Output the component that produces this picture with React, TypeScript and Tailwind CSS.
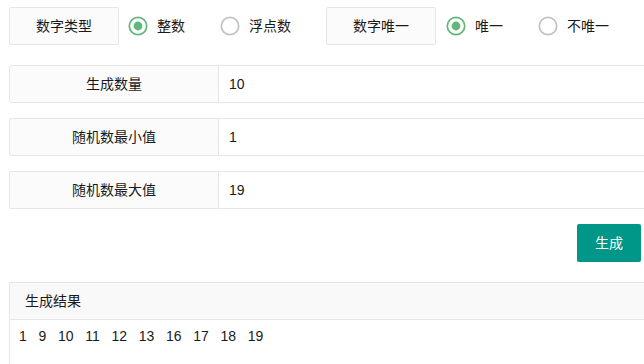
import { useState } from "react";

const FONT = "font-['Liberation_Sans','Noto_Sans_CJK_SC',sans-serif]";

function Radio({ label, checked, onClick }: { label: string; checked: boolean; onClick: () => void }) {
  return (
    <button onClick={onClick} className="flex items-center gap-[9px] cursor-pointer">
      <svg width="20" height="20" viewBox="0 0 20 20" className="shrink-0">
        <circle cx="10" cy="10" r="8.7" fill="none" stroke={checked ? "#5FB878" : "#c2c2c2"} strokeWidth="1.7" />
        {checked && <circle cx="10" cy="10" r="4.4" fill="#5FB878" />}
      </svg>
      <span className="text-sm leading-5 text-[#1a1a1a]">{label}</span>
    </button>
  );
}

const FIELDS = [
  { name: "生成数量", value: "10" },
  { name: "随机数最小值", value: "1" },
  { name: "随机数最大值", value: "19" },
];

const RESULT = [1, 9, 10, 11, 12, 13, 16, 17, 18, 19];

export default function App() {
  const [isInt, setIsInt] = useState(true);
  const [unique, setUnique] = useState(true);

  return (
    <div className={`${FONT} w-[644px] min-h-[364px] overflow-hidden bg-white pl-[9px] pt-[7px] text-[#1a1a1a]`}>
      {/* options */}
      <div className="flex items-center">
        <div className="w-[110px] h-[38px] flex items-center justify-center text-sm bg-[#fbfbfb] border border-[#e6e6e6] rounded-[2px]">
          数字类型
        </div>
        <div className="flex items-center gap-[35px] ml-[9px]">
          <Radio label="整数" checked={isInt} onClick={() => setIsInt(true)} />
          <Radio label="浮点数" checked={!isInt} onClick={() => setIsInt(false)} />
        </div>
        <div className="ml-[35px] w-[110px] h-[38px] flex items-center justify-center text-sm bg-[#fbfbfb] border border-[#e6e6e6] rounded-[2px]">
          数字唯一
        </div>
        <div className="flex items-center gap-[35px] ml-[10px]">
          <Radio label="唯一" checked={unique} onClick={() => setUnique(true)} />
          <Radio label="不唯一" checked={!unique} onClick={() => setUnique(false)} />
        </div>
      </div>

      {/* inputs */}
      <div className="mt-[20px] flex flex-col gap-[15px] mr-[-40px]">
        {FIELDS.map((f) => (
          <div key={f.name} className="flex h-[38px]">
            <div className="w-[210px] flex items-center justify-center text-sm bg-[#fbfbfb] border border-[#e6e6e6] rounded-l-[2px]">
              {f.name}
            </div>
            <input
              defaultValue={f.value}
              className="flex-1 border border-l-0 border-[#e6e6e6] pl-[10px] text-sm text-[#1a1a1a] outline-none"
            />
          </div>
        ))}
      </div>

      <div className="flex justify-end pr-[3px] mt-[15px]">
        <button className="w-[64px] h-[38px] bg-[#009688] text-white text-sm rounded-[2px]">生成</button>
      </div>

      {/* result */}
      <div className="mt-[20px] mr-[-40px] border border-[#e6e6e6] border-r-0 border-b-0">
        <div className="h-[37px] leading-[37px] pl-[15px] text-sm bg-[#f9f9f9] border-b border-[#e6e6e6]">生成结果</div>
        <div className="flex gap-x-[11.7px] pl-[9px] pt-[4px] pb-[20px] text-sm leading-6">
          {RESULT.map((n) => (
            <span key={n}>{n}</span>
          ))}
        </div>
      </div>
    </div>
  );
}
